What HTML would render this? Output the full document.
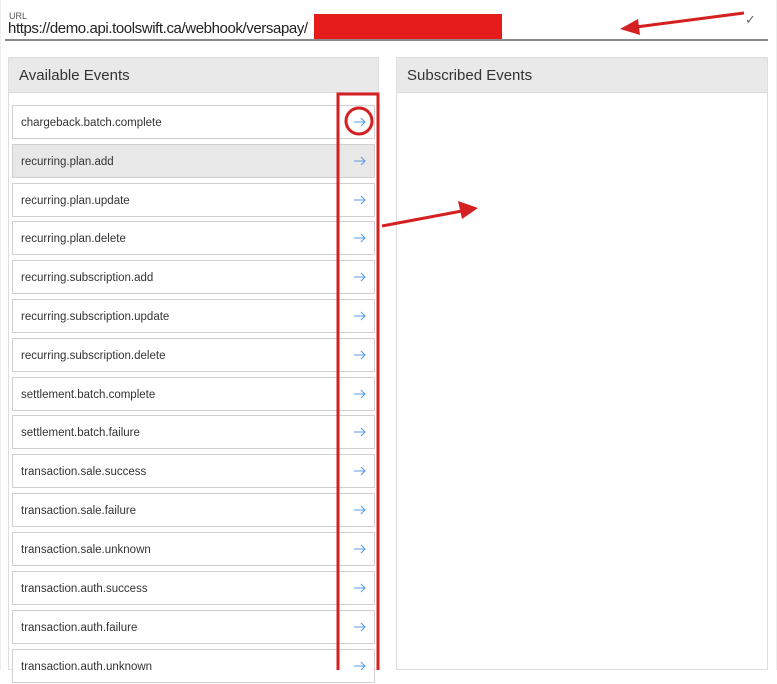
<!DOCTYPE html>
<html><head><style>
*{margin:0;padding:0;box-sizing:border-box}
body{width:777px;height:670px;background:#fff;position:relative;overflow:hidden;font-family:"Liberation Sans",sans-serif}
.a{position:absolute}
.row{position:absolute;left:12px;width:363px;height:34px;border:1px solid #d0d0d0;background:#fff;font-size:11.5px;color:#333;line-height:34px;padding-left:8px}
.row.g{background:#e8e8e8}
</style></head><body>
<div class="a" style="left:0;top:0;width:777px;height:670px;border-left:1px solid #eee;border-right:1px solid #eee"></div>
<div class="a" style="left:9px;top:11px;font-size:9px;color:#555">URL</div>
<div class="a" style="left:8px;top:20px;font-size:15px;color:#222;letter-spacing:-0.4px">https://demo.api.toolswift.ca/webhook/versapay/</div>
<div class="a" style="left:314px;top:14px;width:188px;height:25px;background:#e41c1c"></div>
<div class="a" style="left:5px;top:39px;width:763px;height:2px;background:#8a8a8a"></div>
<div class="a" style="left:745px;top:12px;font-size:13px;color:#666">✓</div>
<div class="a" style="left:8px;top:57px;width:371px;height:613px;border:1px solid #ddd"></div>
<div class="a" style="left:8px;top:57px;width:371px;height:36px;background:#e9e9e9;border:1px solid #ddd;font-size:15px;color:#333;line-height:36px;padding-left:10px">Available Events</div>
<div class="a" style="left:396px;top:57px;width:372px;height:613px;border:1px solid #ddd"></div>
<div class="a" style="left:396px;top:57px;width:372px;height:36px;background:#e9e9e9;border:1px solid #ddd;font-size:15px;color:#333;line-height:36px;padding-left:10px">Subscribed Events</div>
<div class="row" style="top:105px">chargeback.batch.complete</div>
<div class="row g" style="top:144px">recurring.plan.add</div>
<div class="row" style="top:183px">recurring.plan.update</div>
<div class="row" style="top:221px">recurring.plan.delete</div>
<div class="row" style="top:260px">recurring.subscription.add</div>
<div class="row" style="top:299px">recurring.subscription.update</div>
<div class="row" style="top:338px">recurring.subscription.delete</div>
<div class="row" style="top:377px">settlement.batch.complete</div>
<div class="row" style="top:415px">settlement.batch.failure</div>
<div class="row" style="top:454px">transaction.sale.success</div>
<div class="row" style="top:493px">transaction.sale.failure</div>
<div class="row" style="top:532px">transaction.sale.unknown</div>
<div class="row" style="top:571px">transaction.auth.success</div>
<div class="row" style="top:610px">transaction.auth.failure</div>
<div class="row" style="top:649px">transaction.auth.unknown</div>
<svg class="a" style="left:0;top:0" width="777" height="670">
<g stroke="#5a9be0" stroke-width="1.1" fill="none">
<path id="ar" d="M354 122h11M361 118l4 4-4 4"/>
<use href="#ar" y="39"/><use href="#ar" y="78"/><use href="#ar" y="116"/><use href="#ar" y="155"/>
<use href="#ar" y="194"/><use href="#ar" y="233"/><use href="#ar" y="272"/><use href="#ar" y="310"/>
<use href="#ar" y="349"/><use href="#ar" y="388"/><use href="#ar" y="427"/><use href="#ar" y="466"/>
<use href="#ar" y="505"/><use href="#ar" y="544"/>
</g>
<rect x="338" y="94" width="40" height="580" fill="none" stroke="#d42020" stroke-width="3"/>
<circle cx="359" cy="121" r="13" fill="none" stroke="#d42020" stroke-width="3"/>
<line x1="744" y1="13" x2="636" y2="27" stroke="#d42020" stroke-width="3"/>
<polygon points="620,29 638,19 640,35" fill="#d42020"/>
<line x1="382" y1="226" x2="462" y2="211" stroke="#d42020" stroke-width="3"/>
<polygon points="478,208 458,201 462,219" fill="#d42020"/>
</svg>
</body></html>
